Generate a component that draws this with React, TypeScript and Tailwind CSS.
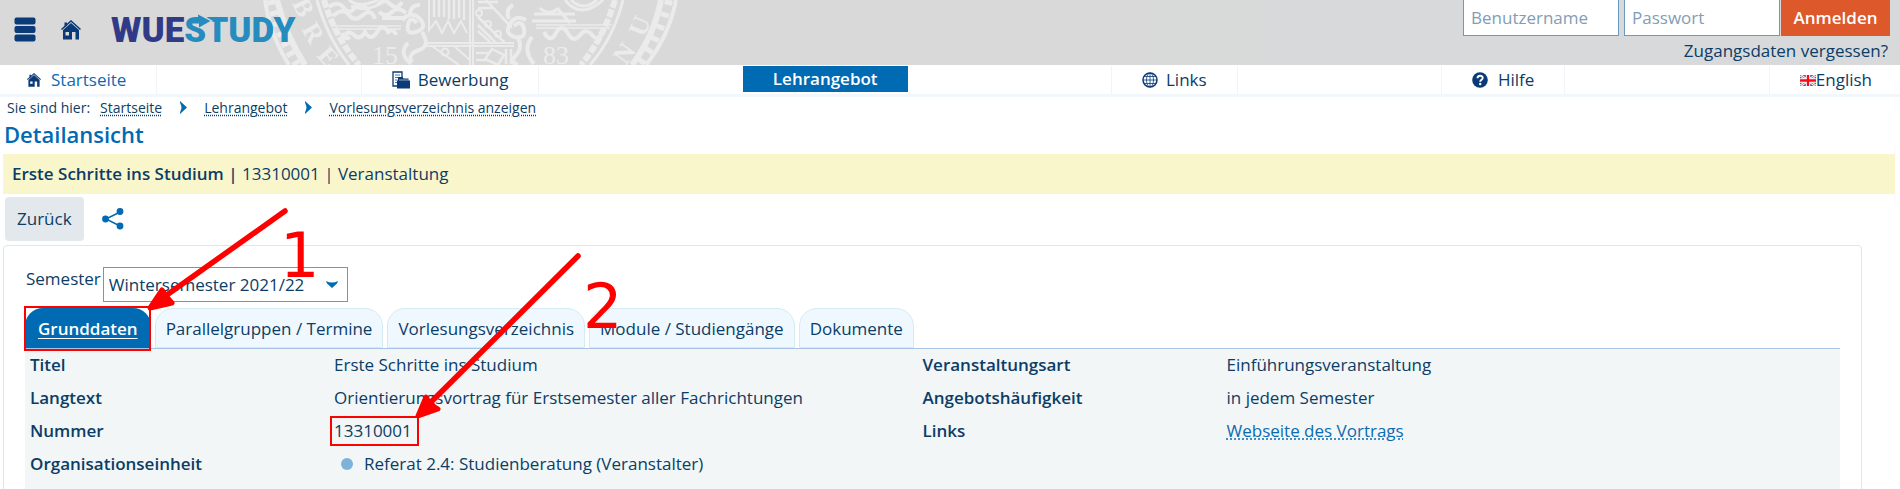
import type { ReactNode } from "react";

function HomeIcon({ className }: { className: string }) {
  return (
    <svg viewBox="0 0 20 20" className={className} aria-hidden="true">
      <path d="M0.5 9.500 10 1 19.500 9.500" fill="none" stroke="#0a3b78" strokeWidth="1.500" />
      <path d="M3.500 2.500h2.500v3l-2.500 2.200z" fill="#0a3b78" />
      <path d="M10 3 18 10v9.500h-3.500v-7.500h-3.500v7.500H2V10zM4.500 12v3.500h3.500V12z" fill="#0a3b78" fillRule="evenodd" />
    </svg>
  );
}

function MenuIcon() {
  return (
    <svg viewBox="0 0 22 26" className="h-[26px] w-[22px]" fill="#0a3b78" aria-hidden="true">
      <rect x="0.500" y="0.500" width="21" height="7" rx="2" />
      <rect x="0.500" y="9" width="21" height="7" rx="2" />
      <rect x="0.500" y="17.500" width="21" height="7" rx="2" />
    </svg>
  );
}

function ApplyIcon() {
  return (
    <svg viewBox="0 0 18 18" className="h-[18px] w-[18px]" aria-hidden="true">
      <path d="M1 1h9v14H1z" fill="#fff" stroke="#0a3b78" strokeWidth="1.300" />
      <path d="M3 4h5M3 6.500h5M3 9h2.500M3 11.500h2" stroke="#4d78a8" strokeWidth="1" />
      <path d="M5 9.500h1V6h4.500l1 1.500h5V9.500H18V17.500H5z" fill="#0a3b78" />
      <path d="M7 9h9.500" stroke="#c9d8e8" strokeWidth="0.700" />
    </svg>
  );
}

function GlobeIcon() {
  return (
    <svg viewBox="0 0 16 16" className="h-4 w-4" fill="none" stroke="#0a3b78" aria-hidden="true">
      <circle cx="8" cy="8" r="7" strokeWidth="1.500" />
      <ellipse cx="8" cy="8" rx="3.500" ry="7" strokeWidth="0.800" />
      <path d="M8 1v14M1 8h14M2 4.500h12M2 11.500h12" strokeWidth="0.800" />
    </svg>
  );
}

function HelpIcon() {
  return (
    <svg viewBox="0 0 16 16" className="h-4 w-4" aria-hidden="true">
      <circle cx="8" cy="8" r="7.800" fill="#0a3b78" />
      <path d="M5.500 6.200C5.500 3 10.700 3 10.700 6c0 1.800-2.500 1.900-2.500 3.800" fill="none" stroke="#fff" strokeWidth="1.900" />
      <circle cx="8.200" cy="12" r="1.200" fill="#fff" />
    </svg>
  );
}

function FlagIcon() {
  return (
    <svg viewBox="0 0 16 11" className="h-[11px] w-4" aria-hidden="true">
      <path d="M0 0h16v11H0z" fill="#2f6fb5" />
      <path d="M0 0 16 11M16 0 0 11" stroke="#fff" strokeWidth="2.600" />
      <path d="M0 0 16 11M16 0 0 11" stroke="#e8414b" strokeWidth="0.800" />
      <path d="M8 0v11M0 5.500h16" stroke="#fff" strokeWidth="4.400" />
      <path d="M8 0v11M0 5.500h16" stroke="#fb0a12" strokeWidth="2.400" />
    </svg>
  );
}

function ShareIcon() {
  return (
    <svg viewBox="0 0 22 22" className="h-[22px] w-[22px]" fill="#006ab3" aria-hidden="true">
      <path d="M18 4 4 11l14 7" fill="none" stroke="#006ab3" strokeWidth="1.500" />
      <circle cx="18" cy="3.500" r="3.400" />
      <circle cx="3.500" cy="11" r="3.400" />
      <circle cx="18" cy="18" r="3.400" />
    </svg>
  );
}

function Chevron() {
  return (
    <svg viewBox="0 0 8 13" className="h-[13px] w-2" aria-hidden="true">
      <path d="M1 0 8 6.500 1 13C0.500 11 2.500 9 2.500 6.500S0.500 2 1 0z" fill="#006ab3" />
    </svg>
  );
}

function Seal() {
  return (
    <svg viewBox="0 0 430 65" className="h-[65px] w-[430px]" fill="none" stroke="#ebebeb" aria-hidden="true">
      <path d="M15 0Q20 35 39 65" strokeWidth="4" />
      <path d="M27 0Q36 36 55 65" strokeWidth="6" />
      <path d="M21 0Q27 34 47 65" strokeWidth="8" strokeDasharray="5 6" />
      <path d="M67 0Q77 37 99 65" strokeWidth="3" />
      <path d="M74 0Q85 37 109 65" strokeWidth="6" strokeDasharray="8 2" />
      <path d="M426 0Q419 36 396 65" strokeWidth="4" />
      <path d="M411 0Q404 36 382 65" strokeWidth="6" />
      <path d="M419 0Q411 36 389 65" strokeWidth="8" strokeDasharray="5 8" />
      <path d="M373 0Q364 37 340 65" strokeWidth="3" />
      <path d="M365 0Q354 37 331 65" strokeWidth="6" strokeDasharray="8 2" />
      <path d="M83 26h68M82 29h69M286 25h76M286 28h74" strokeWidth="1.500" />
      <path d="M94 37q4-8 10-2t11-3q6 10 12 0t11 0q6-4 8 3M92 33q2 8 8 4M294 32q6 12 12 1t13 2q5 8 11 0t13 1q5 6 10-4" strokeWidth="4" />
      <path d="M79 7q9-7 15 1t12-2q8-4 13 6M83 16q10-9 16-1t15-1q8-5 11 5M128 5q5-8 12-1t12-2M129 12q7 6 13 0t14 1M132 18h24" strokeWidth="4" />
      <path d="M99 0q10 9 29 0M101 6q15 7 32-4M315 0q16 20 38 0M321 0q12 12 26 0M284 14h41M282 21h44M290 8q8 8 18 1l12 14" strokeWidth="3" />
      <path d="M152 20q10-10 18-1t-4 13q-10 3-8-7t9-2M170 5q-10 0-10 10M172 32q9 14-3 18t-7 12M158 43q-10 10 3 21" strokeWidth="4" />
      <path d="M276 20q-10-6-16 4t5 13q11 2 9-8t-10-3M282 37q-10 13 2 27M268 38q5 10-2 17t2 10M263 5q-8 4-4 14" strokeWidth="4" />
      <path d="M220 0v65M223 0v65M176 43h88M176 46h88M179 0v30l7-9 6 12 6-12 6 12 7-12 6 12M182 46l27 19M204 46l16 14" strokeWidth="2" />
      <path d="M184 0v17M189 0v17M194 0v17M199 0v19M204 0v19M209 0v18M214 0v20M228 2h20M228 8h16M228 17l27 26M228 25l18 18M236 0l26 28M228 31l12 11M226 53h14M226 60h10M242 49l12 6-6 10-13-6zM256 49v15M261 49v15" strokeWidth="2.500" />
      <circle cx="229" cy="13" r="3" strokeWidth="2" />
      <circle cx="238" cy="24" r="3" strokeWidth="2" />
      <circle cx="248" cy="34" r="3" strokeWidth="2" />
      <circle cx="195" cy="52" r="3.500" strokeWidth="2" />
      <g fill="#ebebeb" stroke="none" className="font-['Liberation_Serif',serif] text-[26px]">
        <text x="122" y="64">15</text>
        <text x="293" y="64">83</text>
        <g className="font-bold">
          <text transform="translate(42 3) rotate(65)">B</text>
          <text transform="translate(51 29) rotate(60)">R</text>
          <text transform="translate(66 56) rotate(48)">E</text>
          <text transform="translate(394 38) rotate(-67)">U</text>
          <text transform="translate(376 66) rotate(-55)">N</text>
        </g>
      </g>
    </svg>
  );
}

function NavItem({ icon, children, edge = "mid", tone = "text-[#0b3d66]" }: { icon: ReactNode; children: ReactNode; edge?: "first" | "mid" | "last"; tone?: string }) {
  const pad = edge === "first" ? "pl-[27px] pr-[30px] border-r" : edge === "last" ? "pl-[30px] pr-7 border-l" : "px-[30px] border-x";
  return (
    <li className={"flex border-[#f1f5f9] " + pad}>
      <a href="#" className={"flex items-center leading-7 " + tone}>
        {icon}
        {children}
      </a>
    </li>
  );
}

const tabs = ["Parallelgruppen / Termine", "Vorlesungsverzeichnis", "Module / Studiengänge", "Dokumente"];

export default function App() {
  return (
    <div className="relative min-h-screen overflow-hidden bg-white font-['Open_Sans',sans-serif] text-[17px] leading-6 text-[#0b3d66]">
      <header className="relative flex h-[65px] justify-between bg-gradient-to-r from-[#d9d9d9] from-60% to-[#d7d9db] to-75%">
        <div className="absolute top-0 left-[250px]"><Seal /></div>
        <div className="relative flex items-start pl-3.5">
          <button type="button" aria-label="Menü" className="mt-[17px]"><MenuIcon /></button>
          <a href="#" aria-label="Startseite" className="mt-5 ml-[25px]"><HomeIcon className="h-5 w-5" /></a>
          <a href="#" className="relative mt-3 ml-[30px] flex font-['Roboto',sans-serif] text-[35px] leading-[38px] font-black">
            <span className="text-[#313a87]">WUE</span>
            <span className="relative text-[#268cbf]">
              STUDY
              <svg viewBox="0 0 32 16" className="absolute top-0 left-0 h-4 w-8" aria-hidden="true">
                <path d="M15 1 29 9 21 15H17z" fill="#d9d9d9" />
                <path d="M4 9Q8 5.500 14 6V2.500L26.500 9 15 15.500V11.500H8z" fill="#268cbf" />
              </svg>
            </span>
          </a>
        </div>
        <form className="relative flex flex-col items-end pr-2.5" onSubmit={(e) => e.preventDefault()}>
          <div className="flex">
            <input aria-label="Benutzername" placeholder="Benutzername" className="mr-[5px] h-9 w-[156px] border border-t-0 border-[#6c9abf] bg-white px-[7px] placeholder:text-[#839db5]" />
            <input aria-label="Passwort" type="password" placeholder="Passwort" className="mr-px h-9 w-[156px] border border-t-0 border-[#6c9abf] bg-white px-[7px] placeholder:text-[#839db5]" />
            <button type="submit" className="h-9 w-[109px] bg-[#dd582a] font-semibold text-white">Anmelden</button>
          </div>
          <a href="#" className="mt-[3px] pr-0.5">Zugangsdaten vergessen?</a>
        </form>
      </header>

      <nav className="border-b-[3px] border-[#f2f7fb] pt-px">
        <ul className="flex justify-between">
          <NavItem edge="first" tone="text-[#0a6bb3]" icon={<HomeIcon className="mr-2.5 h-3.5 w-3.5" />}>Startseite</NavItem>
          <NavItem icon={<span className="mr-2"><ApplyIcon /></span>}>Bewerbung</NavItem>
          <li className="flex pb-0.5"><a href="#" className="bg-[#006ab3] px-[30px] leading-[26px] font-semibold text-white">Lehrangebot</a></li>
          <NavItem icon={<span className="mr-2"><GlobeIcon /></span>}>Links</NavItem>
          <NavItem icon={<span className="mr-2.5"><HelpIcon /></span>}>Hilfe</NavItem>
          <NavItem edge="last" icon={<FlagIcon />}>English</NavItem>
        </ul>
      </nav>

      <nav aria-label="Breadcrumb" className="flex items-center pl-[7px] text-sm leading-[21px]">
        <span className="mr-2.5">Sie sind hier:</span>
        <a href="#" className="underline decoration-dotted underline-offset-2">Startseite</a>
        <span className="mx-[17px]"><Chevron /></span>
        <a href="#" className="underline decoration-dotted underline-offset-2">Lehrangebot</a>
        <span className="mx-[17px]"><Chevron /></span>
        <a href="#" className="underline decoration-dotted underline-offset-2">Vorlesungsverzeichnis anzeigen</a>
      </nav>

      <main className="pl-[3px]">
        <h1 className="pl-px text-[22px] leading-8 font-semibold text-[#006ab3]">Detailansicht</h1>
        <p className="mt-1 mr-[5px] bg-[#faf6cc] pl-[9px] leading-10"><strong className="font-semibold">Erste Schritte ins Studium |</strong> 13310001 | Veranstaltung</p>
        <div className="mt-[3px] flex items-center pl-0.5">
          <button type="button" className="h-11 rounded-sm bg-[#e3e8ec] px-3">Zurück</button>
          <button type="button" aria-label="Teilen" className="ml-[18px]"><ShareIcon /></button>
        </div>

        <section className="mt-1 mr-[38px] min-h-[260px] rounded border border-[#d5ebee] px-[21px] pt-[21px]">
          <div className="flex items-start pl-px">
            <label htmlFor="semester" className="mr-0.5">Semester</label>
            <div className="relative">
              <select id="semester" className="h-[35px] w-[245px] appearance-none border border-[#6c9abf] bg-white pl-[5px] outline-none">
                <option>Wintersemester 2021/22</option>
              </select>
              <svg viewBox="0 0 12 7" className="pointer-events-none absolute top-3.5 right-2.5 h-[7px] w-3" aria-hidden="true">
                <path d="M0 0Q6 3 12 0L11 2.500 6 7 1 2.500z" fill="#006ab3" />
              </svg>
            </div>
          </div>

          <div role="tablist" className="mt-1.5 flex gap-1 border-b border-[#a9c3e6]">
            <button type="button" role="tab" aria-selected="true" className="h-10 rounded-t-[18px] bg-[#006ab3] px-[13px] pt-0.5 font-semibold text-white underline underline-offset-3">Grunddaten</button>
            {tabs.map((t) => (
              <button key={t} type="button" role="tab" aria-selected="false" className="h-10 rounded-t-[18px] border border-[#d5ebf3] bg-[#f0f8ff] px-2.5 pt-0.5">{t}</button>
            ))}
          </div>

          <dl className="grid min-h-[140px] grid-cols-[304px_1fr_304px_1fr] content-start gap-y-[9px] bg-[#f2f6f6] pt-1 pr-[25px] pl-[5px]">
            <dt className="font-semibold">Titel</dt>
            <dd>Erste Schritte ins Studium</dd>
            <dt className="font-semibold">Veranstaltungsart</dt>
            <dd>Einführungsveranstaltung</dd>
            <dt className="font-semibold">Langtext</dt>
            <dd>Orientierungsvortrag für Erstsemester aller Fachrichtungen</dd>
            <dt className="font-semibold">Angebotshäufigkeit</dt>
            <dd>in jedem Semester</dd>
            <dt className="font-semibold">Nummer</dt>
            <dd>13310001</dd>
            <dt className="font-semibold">Links</dt>
            <dd><a href="#" className="text-[#0a6bb3] underline decoration-dotted underline-offset-2">Webseite des Vortrags</a></dd>
            <dt className="font-semibold">Organisationseinheit</dt>
            <dd className="flex items-center pl-[7px]"><span className="mr-[11px] h-3 w-3 rounded-full bg-[#7fb2d9]" />Referat 2.4: Studienberatung (Veranstalter)</dd>
          </dl>
        </section>
      </main>

      <div className="pointer-events-none absolute top-[306px] left-6 h-[45px] w-[127px] border-2 border-[#ff0000]" />
      <div className="pointer-events-none absolute top-[416px] left-[330px] h-[30px] w-[89px] border-2 border-[#ff0000]" />
      <svg viewBox="0 0 600 440" className="pointer-events-none absolute top-0 left-0 h-[440px] w-[600px]" fill="#ff0000" stroke="#ff0000" strokeLinecap="round" strokeLinejoin="round" aria-hidden="true">
        <path d="M285 211 164 297M578 256 426 407" strokeWidth="5.500" />
        <path d="M150 308 162 290 166 296 172 303zM418 416 426 397 430 404 438 409z" strokeWidth="5" />
      </svg>
      <span className="pointer-events-none absolute top-[225px] left-[280px] font-['DejaVu_Sans',sans-serif] text-[62px] leading-[62px] text-[#ff0000]">1</span>
      <span className="pointer-events-none absolute top-[276px] left-[583px] font-['DejaVu_Sans',sans-serif] text-[62px] leading-[62px] text-[#ff0000]">2</span>
    </div>
  );
}
